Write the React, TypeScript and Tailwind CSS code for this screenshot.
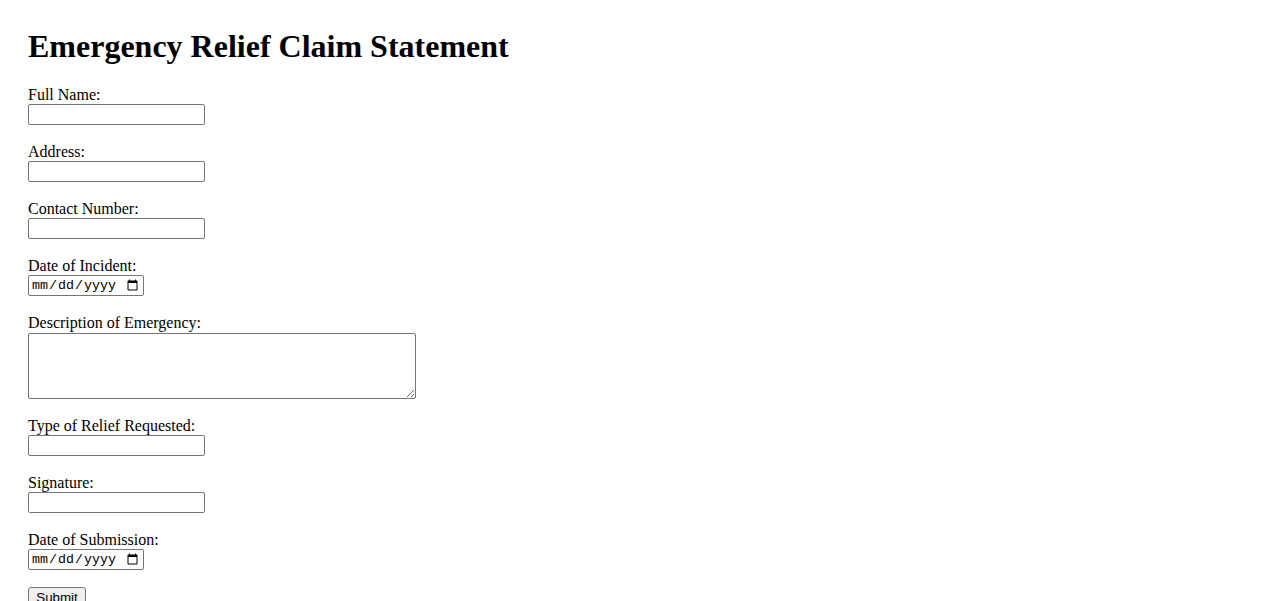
import React from "react";

type Field = { label: string; kind: "text" | "date" | "textarea" };

const FIELDS: Field[] = [
  { label: "Full Name:", kind: "text" },
  { label: "Address:", kind: "text" },
  { label: "Contact Number:", kind: "text" },
  { label: "Date of Incident:", kind: "date" },
  { label: "Description of Emergency:", kind: "textarea" },
  { label: "Type of Relief Requested:", kind: "text" },
  { label: "Signature:", kind: "text" },
  { label: "Date of Submission:", kind: "date" },
];

const inputBase = "block border border-[#767676] rounded-[2px] bg-white text-black outline-none";

const App: React.FC = () => {
  return (
    <div className="min-h-screen bg-white px-[28px] pt-[28px] text-black font-['Liberation_Serif','Times_New_Roman',serif]">
      <h1 className="text-[32px] leading-[37px] font-bold">Emergency Relief Claim Statement</h1>
      <form className="mt-[20px] flex flex-col gap-[17px]" onSubmit={(e) => e.preventDefault()}>
        {FIELDS.map((f) => (
          <div key={f.label} className="flex flex-col">
            <label className="pt-px text-[16px] leading-[18px]">{f.label}</label>
            {f.kind === "text" && (
              <input type="text" className={`${inputBase} h-[21px] w-[177px] px-[2px] text-[13.33px] font-['Liberation_Sans',Arial,sans-serif]`} />
            )}
            {f.kind === "date" && (
              <input
                type="date"
                className={`${inputBase} h-[21px] w-[116px] px-[2px] text-[13.33px] font-['Liberation_Mono',monospace]`}
              />
            )}
            {f.kind === "textarea" && (
              <textarea
                className={`${inputBase} mt-px h-[66px] w-[388px] p-[2px] text-[13.33px] font-['Liberation_Mono',monospace]`}
              />
            )}
          </div>
        ))}
        <div className="-mt-[2px]">
          <button
            type="submit"
            className="h-[21px] w-[58px] rounded-[3px] border border-[#767676] bg-[#efefef] text-[13.33px] leading-[17px] text-black font-['Liberation_Sans',Arial,sans-serif]"
          >
            Submit
          </button>
        </div>
      </form>
    </div>
  );
};

export default App;
